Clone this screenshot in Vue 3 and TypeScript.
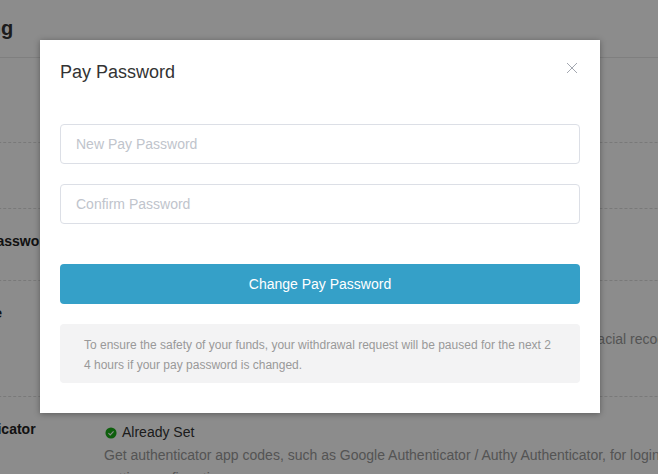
<script setup lang="ts">
interface Row {
  label: string
  status?: string
  lines: string[]
}

const rows: Row[] = [
  { label: 'Nickname', lines: ['Used to identify your account when you log in.'] },
  { label: 'Email', lines: ['Used to receive account notifications.'] },
  { label: 'Authorization Password', lines: ['Used for withdrawals and security settings.'] },
  {
    label: 'Biometric Image',
    status: 'Already Set',
    lines: ['To protect the safety of your account please always verify your identity through facial recognition'],
  },
  {
    label: 'Google Authenticator',
    status: 'Already Set',
    lines: [
      'Get authenticator app codes, such as Google Authenticator / Authy Authenticator, for login',
      'setting confirmation',
    ],
  },
]
</script>

<template>
  <div class="page">
    <div class="setting">
      <h1 class="title">Security Setting</h1>
      <section v-for="row in rows" :key="row.label" class="row">
        <div class="label">{{ row.label }}</div>
        <div class="body">
          <div v-if="row.status" class="status">
            <svg class="check" viewBox="0 0 14 14" aria-hidden="true">
              <circle cx="7" cy="7" r="6.5" fill="#1aad19" />
              <path d="M4 7.2l2.1 2.1L10 5.2" fill="none" stroke="#fff" stroke-width="1.3" />
            </svg>
            <span>{{ row.status }}</span>
          </div>
          <p v-for="(line, i) in row.lines" :key="i" class="desc">{{ line }}</p>
        </div>
      </section>
    </div>

    <div class="overlay">
      <div class="modal">
        <header class="modal-head">
          <h2 class="modal-title">Pay Password</h2>
          <button class="close" type="button" aria-label="Close">
            <svg viewBox="0 0 12 12" width="12" height="12" aria-hidden="true">
              <path d="M1 1l10 10M11 1L1 11" fill="none" stroke="#a3a7b0" stroke-width="1" />
            </svg>
          </button>
        </header>
        <form class="form" @submit.prevent>
          <input class="field" type="password" placeholder="New Pay Password" />
          <input class="field" type="password" placeholder="Confirm Password" />
          <button class="submit" type="submit">Change Pay Password</button>
        </form>
        <p class="notice">To ensure the safety of your funds, your withdrawal request will be paused for the next 24 hours if your pay password is changed.</p>
      </div>
    </div>
  </div>
</template>

<style>
html, body { margin: 0; background: #fff; overflow: hidden; }
</style>

<style scoped>
.page {
  position: relative;
  width: 658px;
  height: 474px;
  overflow: hidden;
  font-family: "Liberation Sans", Arial, sans-serif;
  background: #fff;
}
.setting {
  width: 1000px;
  margin-left: -107px;
}
.title {
  margin: 0;
  height: 57px;
  border-bottom: 1px solid #e8e8e8;
  font-size: 20px;
  line-height: 56px;
  font-weight: 700;
  color: #333;
  text-indent: -32px;
}
.row {
  display: flex;
  box-sizing: border-box;
  height: 66px;
  padding-top: 24px;
  border-bottom: 1px dashed #dcdcdc;
}
.row:nth-of-type(1) { height: 85px; }
.row:nth-of-type(3) { height: 72px; }
.row:nth-of-type(4) { height: 116px; }
.row:nth-of-type(5) { height: 120px; border-bottom: 0; }
.label {
  flex: 0 0 211px;
  font-size: 14px;
  line-height: 16px;
  font-weight: 700;
  color: #222;
  white-space: nowrap;
  overflow: hidden;
}
.body {
  width: 640px;
  font-size: 14px;
  line-height: 23px;
}
.status {
  display: flex;
  align-items: center;
  gap: 5px;
  height: 23px;
  margin-left: 1px;
  color: #333;
}
.check {
  width: 12px;
  height: 12px;
}
.desc {
  margin: 0;
  color: #999;
  white-space: nowrap;
}
.overlay {
  position: absolute;
  inset: 0;
  background: rgba(0, 0, 0, 0.45);
}
.modal {
  box-sizing: border-box;
  width: 560px;
  height: 373px;
  margin: 40px 0 0 40px;
  padding: 20px;
  background: #fff;
  box-shadow: 0 1px 6px rgba(0, 0, 0, 0.35);
}
.modal-head {
  display: flex;
  justify-content: space-between;
  height: 64px;
}
.modal-title {
  margin: 0;
  font-size: 18px;
  line-height: 24px;
  font-weight: 400;
  color: #333;
}
.close {
  display: block;
  width: 12px;
  height: 12px;
  margin: 2px 2px 0 0;
  padding: 0;
  border: 0;
  background: none;
}
.close svg { display: block; }
.form {
  display: flex;
  flex-direction: column;
  gap: 20px;
}
.field {
  box-sizing: border-box;
  width: 100%;
  height: 40px;
  padding: 0 15px;
  border: 1px solid #dcdfe6;
  border-radius: 4px;
  outline: 0;
  font: 14px "Liberation Sans", Arial, sans-serif;
  color: #333;
}
.field::placeholder {
  color: #c0c4cc;
  opacity: 1;
}
.submit {
  height: 40px;
  margin-top: 20px;
  border: 0;
  border-radius: 4px;
  background: #35a0c8;
  color: #fff;
  font: 14px "Liberation Sans", Arial, sans-serif;
}
.notice {
  box-sizing: border-box;
  height: 59px;
  margin: 20px 0 0;
  padding: 11px 24px;
  border-radius: 4px;
  background: #f3f3f4;
  font-size: 12px;
  line-height: 20px;
  color: #999;
  word-break: break-all;
}
</style>
